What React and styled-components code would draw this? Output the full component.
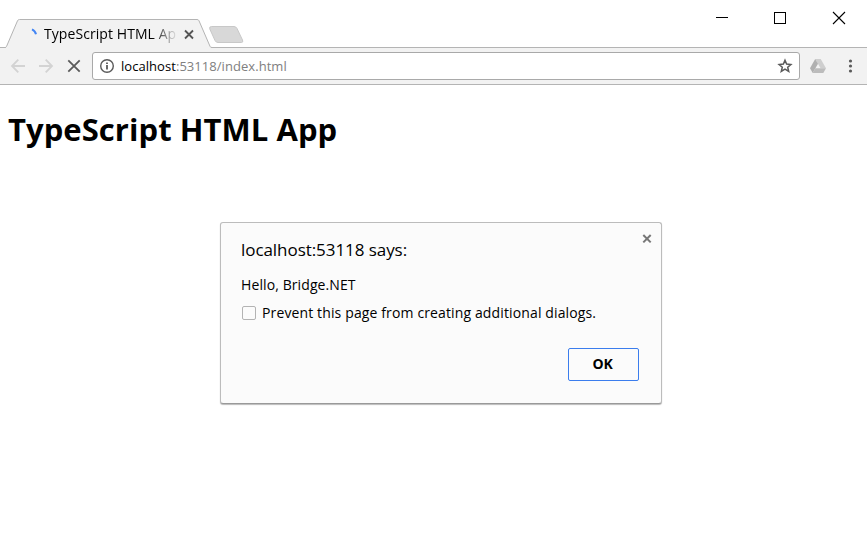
import React from 'react';
import styled, { createGlobalStyle } from 'styled-components';

const GlobalStyle = createGlobalStyle`
  * { box-sizing: border-box; }
  body { margin: 0; background: #fff; overflow: hidden; }
`;

const Window = styled.div`
  width: 867px;
  height: 547px;
  display: flex;
  flex-direction: column;
  background: #fff;
  color: #000;
  font-family: 'Open Sans', 'Noto Sans', sans-serif;
`;

const Label = styled.span`
  font-size: ${(p) => p.$size}px;
  letter-spacing: ${(p) => p.$track || 0}px;
  line-height: 20px;
  white-space: nowrap;
  color: ${(p) => p.$color || '#000'};
`;

const TitleBar = styled.header`
  height: 47px;
  flex: none;
  display: flex;
  align-items: flex-start;
`;

const Tab = styled.div`
  position: relative;
  z-index: 1;
  width: 207px;
  height: 29px;
  margin: 19px 0 -1px 5px;
  padding-left: 23px;
  display: flex;
  align-items: center;
`;

const TabShape = styled.svg`
  position: absolute;
  inset: 0;
  z-index: -1;
`;

const TabTitle = styled.div`
  width: 132px;
  height: 20px;
  margin: 0 7px 0 5px;
  overflow: hidden;
  display: flex;
  mask-image: linear-gradient(to right, #000 108px, transparent 134px);
`;

const NewTab = styled.svg`
  margin: 25px 0 0 -4px;
`;

const WindowControls = styled.div`
  margin-left: auto;
  padding: 11px 21px 0 0;
  display: flex;
  gap: 44px;
`;

const CloseWindow = styled.svg`
  margin-left: 1px;
`;

const Toolbar = styled.nav`
  height: 38px;
  flex: none;
  display: flex;
  align-items: center;
  background: #f2f2f2;
  border-top: 1px solid #b4b4b4;
  border-bottom: 1px solid #b4b4b4;
`;

const NavButtons = styled.div`
  width: 92px;
  padding-left: 10px;
  display: flex;
  gap: 12px;
`;

const AddressBar = styled.div`
  width: 708px;
  height: 28px;
  padding: 0 6px;
  display: flex;
  align-items: center;
  background: #fff;
  border: 1px solid #a9a9a9;
  border-radius: 3px;
`;

const Address = styled.div`
  flex: 1;
  display: flex;
  padding-left: 6px;
`;

const Extensions = styled.div`
  flex: 1;
  display: flex;
  align-items: center;
  padding-left: 9px;
`;

const Page = styled.main`
  flex: 1;
  padding: 0 8px;
`;

const Heading = styled.h1`
  margin: 23px 0 0;
  font-size: 31px;
  line-height: 43px;
  font-weight: 700;
  letter-spacing: 0.05px;
  white-space: nowrap;
`;

const Dialog = styled.section`
  width: 442px;
  height: 182px;
  margin: 71px 0 0 212px;
  padding: 0 22px 0 20px;
  display: flex;
  flex-direction: column;
  background: #fbfbfb;
  border: 1px solid #bcbcbc;
  border-bottom-color: #999;
  border-radius: 3px;
  box-shadow: 0 1px 1px #bbb;
`;

const DialogHeader = styled.div`
  height: 52px;
  padding-top: 17px;
  display: flex;
  justify-content: space-between;
  align-items: flex-start;
`;

const CloseIcon = styled.svg`
  margin: -7px -14px 0 0;
`;

const Option = styled.label`
  margin-top: 8px;
  display: flex;
  align-items: center;
  gap: 6px;
`;

const Checkbox = styled.input`
  appearance: none;
  width: 14px;
  height: 14px;
  margin: 0 0 0 1px;
  border: 1px solid #b3b3b3;
  border-radius: 2px;
  background: #fbfbfb;
`;

const OkButton = styled.button`
  width: 71px;
  height: 33px;
  margin: 25px 0 0;
  padding: 0 2px 2px 0;
  align-self: flex-end;
  border: 1px solid #3b7ded;
  border-radius: 2px;
  background: #fbfbfb;
  color: #000;
  font: 700 14px 'Open Sans', 'Noto Sans', sans-serif;
  letter-spacing: -0.2px;
`;

const Arrow = ({ d }) => (
  <svg width="16" height="16" fill="none" stroke="#d3d3d3" strokeWidth="1.8">
    <path d={d} />
  </svg>
);

export default function App() {
  return (
    <Window>
      <GlobalStyle />
      <TitleBar>
        <Tab>
          <TabShape width="207" height="29">
            <path d="M0 29 Q1 28.5 1.5 27.5 L12.5 1.8 Q13 .5 14.5 .5 H192 Q193.5 .5 194 1.8 L205 27.3 Q205.5 28.5 207 29Z" fill="#f2f2f2" />
            <path d="M0 28.5 Q1 28.5 1.5 27.5 L12.5 1.8 Q13 .5 14.5 .5 H192 Q193.5 .5 194 1.8 L205 27.3 Q205.5 28.5 207 28.5" fill="none" stroke="#b4b4b4" />
          </TabShape>
          <svg width="11" height="16" fill="none" stroke="#4285f4" strokeWidth="2">
            <path d="M4 3.3 Q7.2 4.7 8 8.2" />
          </svg>
          <TabTitle><Label $size={14} $track={0.07}>TypeScript HTML App</Label></TabTitle>
          <svg width="12" height="12" fill="none" stroke="#555" strokeWidth="1.8">
            <path d="M2 2.5 L10 10.5 M10 2.5 L2 10.5" />
          </svg>
        </Tab>
        <NewTab width="36" height="20">
          <path d="M3.5 1.5 H26 Q28 1.5 29 3.5 L34.5 15 Q35.5 17.5 33.5 17.5 H10 Q8 17.5 7 15.5 L1.8 4 Q1 1.5 3.5 1.5Z" fill="#d8d8d8" stroke="#c8c8c8" />
        </NewTab>
        <WindowControls>
          <svg width="14" height="14" shapeRendering="crispEdges"><path d="M1 6.5 H13" stroke="#000" /></svg>
          <svg width="14" height="14" shapeRendering="crispEdges"><path d="M1.5 1.5 H12.5 V12.5 H1.5Z" fill="none" stroke="#000" /></svg>
          <CloseWindow width="14" height="14"><path d="M1 1 L13 13 M13 1 L1 13" stroke="#000" strokeWidth="1.1" /></CloseWindow>
        </WindowControls>
      </TitleBar>
      <Toolbar>
        <NavButtons>
          <Arrow d="M15 8 H2.5 M8.3 1.7 L2 8 L8.3 14.3" />
          <Arrow d="M1 8 H13.5 M7.7 1.7 L14 8 L7.7 14.3" />
          <svg width="16" height="16" fill="none" stroke="#5a5a5a" strokeWidth="1.8"><path d="M2.3 2.3 L13.7 13.7 M13.7 2.3 L2.3 13.7" /></svg>
        </NavButtons>
        <AddressBar>
          <svg width="16" height="16" fill="none" stroke="#5a5a5a">
            <circle cx="8" cy="8" r="6.3" strokeWidth="1.4" />
            <path d="M8 7 V11.5 M8 4.5 V6" strokeWidth="1.8" />
          </svg>
          <Address>
            <Label $size={13} $track={0.05}>localhost</Label>
            <Label $size={13} $track={0.05} $color="#808080">:53118/index.html</Label>
          </Address>
          <svg width="16" height="16" fill="none" stroke="#5a5a5a" strokeWidth="1.5">
            <path d="M8 2.2 L9.6 6.1 L13.9 6.5 L10.7 9.3 L11.7 13.4 L8 11.2 L4.3 13.4 L5.3 9.3 L2.1 6.5 L6.4 6.1Z" />
          </svg>
        </AddressBar>
        <Extensions>
          <svg width="18" height="16">
            <path d="M6.2 1 H11.7 L17 10.3 H11.6Z" fill="#cecece" />
            <path d="M6.2 1 L9 5.8 L3.7 15 L1 10.3Z" fill="#b0b0b0" />
            <path d="M6.4 10.3 H17 L14.3 15 H3.7Z" fill="#bcbcbc" />
          </svg>
          <svg width="40" height="16" fill="#5a5a5a">
            <circle cx="23.5" cy="3" r="1.6" /><circle cx="23.5" cy="8" r="1.6" /><circle cx="23.5" cy="13" r="1.6" />
          </svg>
        </Extensions>
      </Toolbar>
      <Page>
        <Heading>TypeScript HTML App</Heading>
        <Dialog role="dialog">
          <DialogHeader>
            <Label $size={17} $track={-0.06}>localhost:53118 says:</Label>
            <CloseIcon width="12" height="12" fill="none" stroke="#777" strokeWidth="2">
              <path d="M2.3 2 L9.7 9.4 M9.7 2 L2.3 9.4" />
            </CloseIcon>
          </DialogHeader>
          <Label $size={14} $track={0.1}>Hello, Bridge.NET</Label>
          <Option>
            <Checkbox type="checkbox" />
            <Label $size={14} $track={0.13}>Prevent this page from creating additional dialogs.</Label>
          </Option>
          <OkButton>OK</OkButton>
        </Dialog>
      </Page>
    </Window>
  );
}
